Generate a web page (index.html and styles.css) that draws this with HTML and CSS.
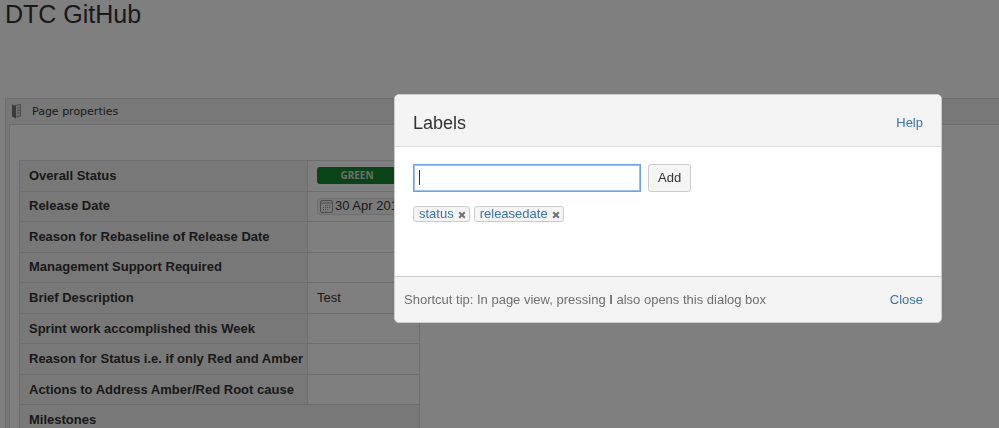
FILE: index.html
```html
<!DOCTYPE html>
<html lang="en">
<head>
<meta charset="utf-8">
<title>DTC GitHub</title>
<link rel="stylesheet" href="styles.css">
</head>
<body>
<main class="page">
  <h1 class="page-title">DTC GitHub</h1>
  <section class="macro">
    <header class="macro-header">
      <svg class="macro-icon" viewBox="0 0 12 16" width="12" height="16" aria-hidden="true">
        <path d="M4 1.500 9.500 .5V12L5 13" fill="#ddd" stroke="#999" stroke-width="1"/>
        <path d="M1 .5 5 2V14.500L1 12.500Z" fill="#777"/>
        <path d="M6.500 4H8.500M6.500 6.500H8.500M6.500 9H8.500" stroke="#888"/>
      </svg>
      <span>Page properties</span>
    </header>
    <div class="macro-body">
      <table class="props">
        <tbody>
          <tr><th scope="row">Overall Status</th><td><span class="lozenge">GREEN</span></td></tr>
          <tr><th scope="row">Release Date</th><td><time class="date" datetime="2018-04-30"><svg viewBox="0 0 13 13" width="13" height="13" aria-hidden="true"><rect x=".5" y=".5" width="12" height="12" rx="1.500" fill="none" stroke="#999"/><path d="M1 3H12" stroke="#999"/><path d="M5 5.500H11M3 7.500H11M3 9.500H9" stroke="#999" stroke-dasharray="1 1"/></svg>30 Apr 2018</time></td></tr>
          <tr><th scope="row">Reason for Rebaseline of Release Date</th><td></td></tr>
          <tr><th scope="row">Management Support Required</th><td></td></tr>
          <tr><th scope="row">Brief Description</th><td>Test</td></tr>
          <tr><th scope="row">Sprint work accomplished this Week</th><td></td></tr>
          <tr><th scope="row">Reason for Status i.e. if only Red and Amber</th><td></td></tr>
          <tr><th scope="row">Actions to Address Amber/Red Root cause</th><td></td></tr>
          <tr><th scope="row" colspan="2">Milestones</th></tr>
        </tbody>
      </table>
    </div>
  </section>
</main>
<div class="blanket">
  <section class="dialog" role="dialog" aria-modal="true" aria-labelledby="dialog-title">
    <header class="dialog-header">
      <h2 id="dialog-title">Labels</h2>
      <a href="#help">Help</a>
    </header>
    <div class="dialog-body">
      <form class="label-form">
        <div class="field"><input type="text" aria-label="Label"><span class="caret"></span></div>
        <button class="add" type="button">Add</button>
      </form>
      <ul class="labels">
        <li><a href="#status">status</a><button type="button" aria-label="Remove status"><svg viewBox="0 0 8 8" width="8" height="8" aria-hidden="true"><path d="M1.200 1.200 6.800 6.800M6.800 1.200 1.200 6.800"/></svg></button></li>
        <li><a href="#releasedate">releasedate</a><button type="button" aria-label="Remove releasedate"><svg viewBox="0 0 8 8" width="8" height="8" aria-hidden="true"><path d="M1.200 1.200 6.800 6.800M6.800 1.200 1.200 6.800"/></svg></button></li>
      </ul>
    </div>
    <footer class="dialog-footer">
      <span>Shortcut tip: In page view, pressing <b>l</b> also opens this dialog box</span>
      <a href="#close">Close</a>
    </footer>
  </section>
</div>
</body>
</html>
```

FILE: styles.css
```css
* { box-sizing: border-box; }
html, body { height: 100%; }
body {
  margin: 0;
  overflow: hidden;
  background: #fff;
  color: #333;
  font: 13px/20px "Liberation Sans", Arial, sans-serif;
}
a { color: #3b73af; text-decoration: none; }

.page { height: 100%; overflow: hidden; padding-left: 5px; }
.page-title {
  margin: 0 0 70px;
  font-size: 25px;
  line-height: 28px;
  font-weight: 400;
}

.macro {
  border: 1px solid #ddd;
  border-right: 0;
  background: #f0f0f0;
  padding-left: 3px;
}
.macro-header {
  display: flex;
  align-items: center;
  gap: 9px;
  height: 25px;
  padding-left: 2px;
  font: 11px/16px "DejaVu Sans", sans-serif;
}
.macro-body {
  padding: 35px 9px 20px;
  border-top: 1px solid #ddd;
  border-left: 1px solid #ddd;
  background: #fff;
}

.props {
  width: 401px;
  height: 276px;
  border-collapse: collapse;
  table-layout: fixed;
}
.props th, .props td {
  border: 1px solid #ddd;
  padding: 0 9px;
  line-height: 18px;
  text-align: left;
  white-space: nowrap;
}
.props th { width: 288px; background: #f0f0f0; }
.lozenge {
  display: block;
  width: 80px;
  height: 17px;
  border-radius: 3px;
  background: #14892c;
  color: #ddd;
  font: bold 10px/17px "Noto Sans", sans-serif;
  text-align: center;
}
.date {
  display: flex;
  width: fit-content;
  align-items: center;
  gap: 2px;
  height: 17px;
  padding: 0 2px;
  border: 1px solid #ddd;
  border-radius: 3px;
  background: #f5f5f5;
}

.blanket {
  position: fixed;
  inset: 0;
  display: flex;
  justify-content: flex-end;
  align-items: flex-start;
  padding: 94px 57px 0 0;
  background: rgba(0, 0, 0, .5);
}
.dialog {
  width: 548px;
  border: 1px solid #ccc;
  border-radius: 5px;
  overflow: hidden;
  background: #fff;
}
.dialog-header, .dialog-footer {
  display: flex;
  justify-content: space-between;
  align-items: center;
  background: #f4f4f4;
}
.dialog-header {
  height: 52px;
  padding: 4px 18px 0;
  border-bottom: 1px solid #ddd;
}
.dialog-header h2 { margin: 0; font-size: 18px; line-height: 24px; font-weight: 400; }
.dialog-body { min-height: 129px; padding: 17px 18px; }
.dialog-footer {
  height: 46px;
  padding: 0 18px 0 9px;
  border-top: 1px solid #ccc;
  color: #707070;
}
.label-form { display: flex; gap: 7px; }
.field { position: relative; width: 228px; }
.field input {
  width: 100%;
  height: 28px;
  padding: 0 6px;
  border: 1px solid #6ba1f2;
  outline: 0;
  box-shadow: inset 0 0 0 1px #9bbff5;
  font: inherit;
}
.caret {
  position: absolute;
  top: 6px;
  left: 6px;
  width: 1px;
  height: 15px;
  background: #333;
}
.add {
  height: 28px;
  padding: 0 9px;
  border: 1px solid #ccc;
  border-radius: 3px;
  background: #f5f5f5;
  color: #333;
  font: inherit;
}
.labels {
  display: flex;
  gap: 4px;
  margin: 14px 0 0;
  padding: 0;
  list-style: none;
}
.labels li {
  display: flex;
  align-items: center;
  gap: 4px;
  height: 16px;
  padding: 0 3px 0 5px;
  border: 1px solid #ccc;
  border-radius: 3px;
  background: #f5f5f5;
  line-height: 14px;
}
.labels button {
  display: flex;
  padding: 2px 0 0;
  border: 0;
  background: none;
}
.labels path { stroke: #707070; stroke-width: 2; fill: none; }
```
